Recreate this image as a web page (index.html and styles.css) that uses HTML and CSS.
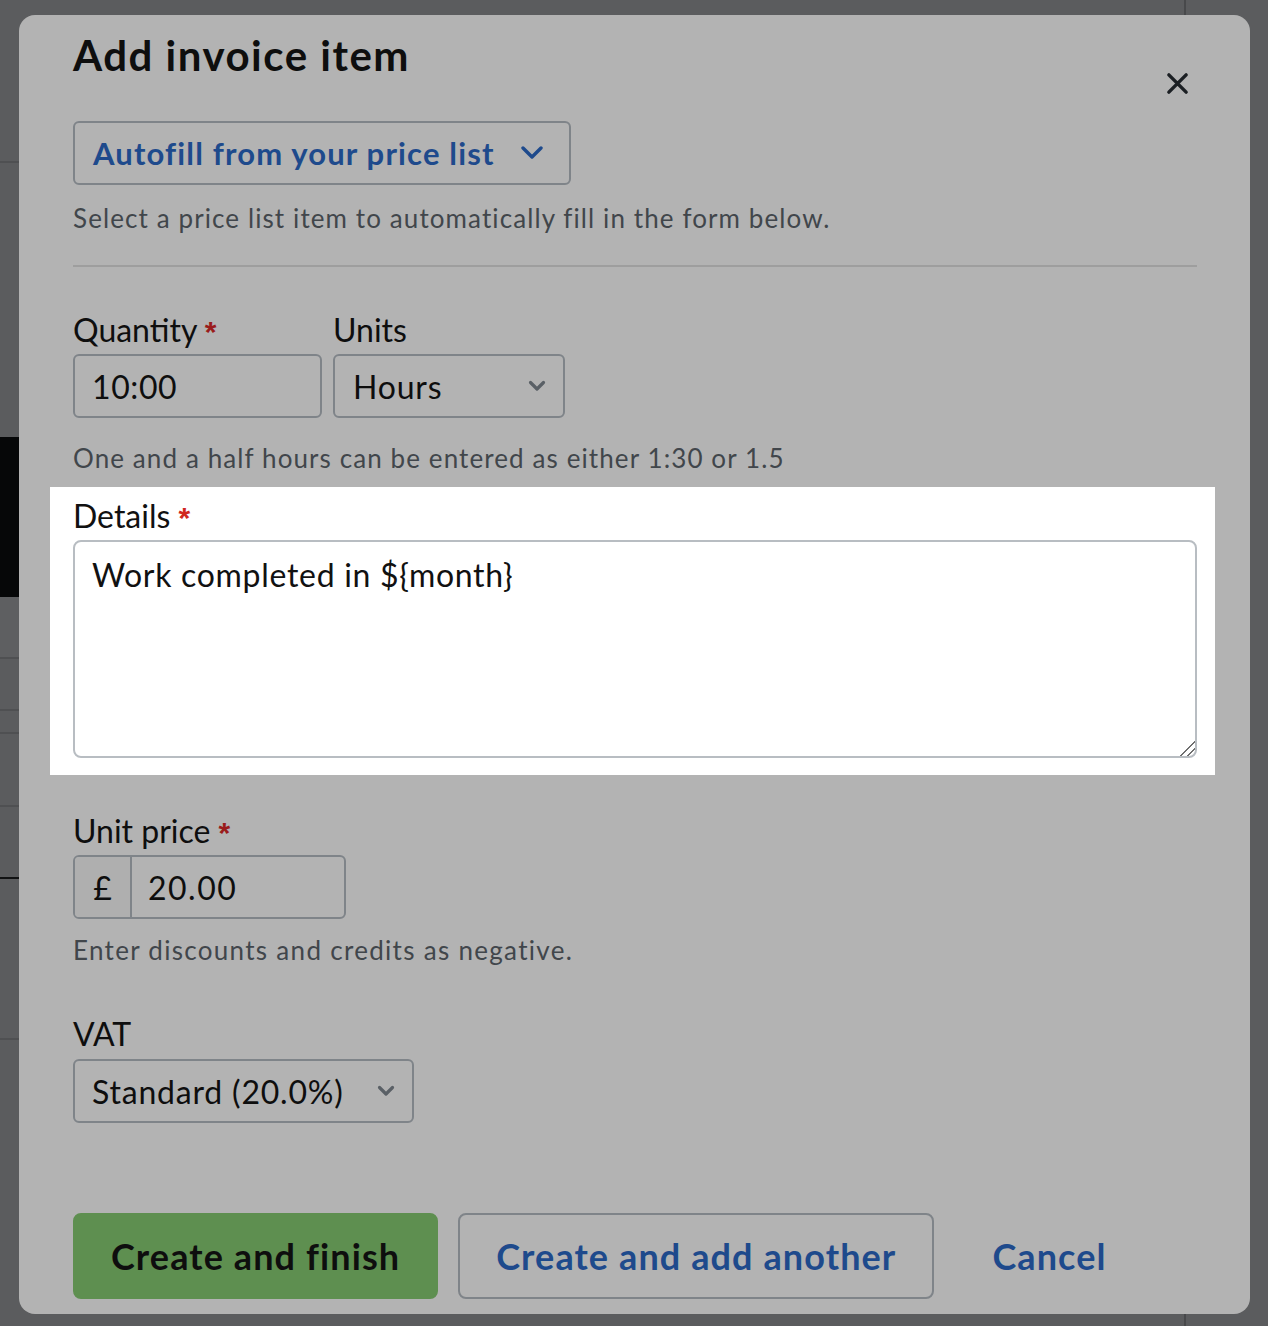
FILE: index.html
```
<!DOCTYPE html>
<html lang="en">

<head>
    <meta charset="utf-8">
    <meta name="viewport" content="width=device-width, initial-scale=1.0">
    <title>Add invoice item</title>
    <link rel="stylesheet" href="styles.css">
</head>

<body>
    <!-- page behind the dialog -->
    <div class="page">
        <div class="side">
            <div class="strip strip-top"></div>
            <div class="strip strip-tall"></div>
            <div class="strip strip-dark"></div>
            <div class="strip strip-light"></div>
            <div class="strip strip-52"></div>
            <div class="strip strip-23"></div>
            <div class="strip strip-72"></div>
            <div class="strip strip-71"></div>
            <div class="strip strip-160"></div>
        </div>
    </div>

    <div class="modal">
        <div class="modal-head">
            <h1>Add invoice item</h1>
            <button class="close" aria-label="Close">
                <svg width="24" height="24" viewBox="0 0 24 24">
                    <path d="M3 3 L21 21 M21 3 L3 21" stroke="#1b1f23" stroke-width="3.6" stroke-linecap="round" fill="none" />
                </svg>
            </button>
        </div>

        <button class="autofill">
            Autofill from your price list
            <svg width="22" height="14" viewBox="0 0 22 14">
                <path d="M2 2 L11 11 L20 2" stroke="#1e4a8c" stroke-width="3.4" stroke-linecap="round" stroke-linejoin="round" fill="none" />
            </svg>
        </button>
        <p class="help">Select a price list item to automatically fill in the form below.</p>

        <hr>

        <div class="row">
            <div class="field">
                <label class="label">Quantity <span class="req">*</span></label>
                <input class="input qty" type="text" value="10:00">
            </div>
            <div class="field">
                <label class="label">Units</label>
                <div class="select-box units">
                    <select>
                        <option>Hours</option>
                    </select>
                    <svg width="18" height="12" viewBox="0 0 18 12">
                        <path d="M2.5 2.5 L9 9 L15.5 2.5" stroke="#5a6066" stroke-width="3.2" stroke-linecap="round" stroke-linejoin="round" fill="none" />
                    </svg>
                </div>
            </div>
        </div>
        <p class="help help-qty">One and a half hours can be entered as either 1:30 or 1.5</p>

        <div class="spotlight">
            <label class="label">Details <span class="req">*</span></label>
            <textarea>Work completed in ${month}</textarea>
        </div>

        <div class="field price-field">
            <label class="label">Unit price <span class="req">*</span></label>
            <div class="price">
                <span class="currency">£</span>
                <input type="text" value="20.00">
            </div>
        </div>
        <p class="help help-price">Enter discounts and credits as negative.</p>

        <div class="field vat-field">
            <label class="label">VAT</label>
            <div class="select-box vat">
                <select>
                    <option>Standard (20.0%)</option>
                </select>
                <svg width="18" height="12" viewBox="0 0 18 12">
                    <path d="M2.5 2.5 L9 9 L15.5 2.5" stroke="#5a6066" stroke-width="3.2" stroke-linecap="round" stroke-linejoin="round" fill="none" />
                </svg>
            </div>
        </div>

        <div class="actions">
            <button class="btn btn-primary">Create and finish</button>
            <button class="btn btn-secondary">Create and add another</button>
            <button class="btn btn-link">Cancel</button>
        </div>
    </div>
</body>

</html>
```

FILE: styles.css
```
body {
    margin: 0;
    height: 1326px;
    overflow: hidden;
    background-color: #5b5c5e;
    font-family: 'Lato', 'Liberation Sans', sans-serif;
}

/* page behind */
.page {
    display: flex;
    height: 100%;
}

.side {
    width: 1184px;
    border-right: 2px solid #48494b;
    display: flex;
    flex-direction: column;
}

.strip {
    border-bottom: 2px solid #4f5052;
}

.strip-top {
    height: 161px;
}

.strip-tall {
    height: 274px;
    border-bottom: none;
}

.strip-dark {
    height: 160px;
    background-color: #060708;
    border-bottom: none;
}

.strip-light {
    height: 60px;
    background-color: #5e5f61;
}

.strip-52 {
    height: 50px;
}

.strip-23 {
    height: 21px;
}

.strip-72 {
    height: 71px;
}

.strip-71 {
    height: 70px;
    border-bottom-color: #111213;
}

.strip-160 {
    height: 159px;
}

/* dialog */
.modal {
    position: fixed;
    left: 19px;
    top: 15px;
    width: 1231px;
    height: 1299px;
    box-sizing: border-box;
    padding: 14px 53px 15px 54px;
    border-radius: 16px;
    background-color: #b3b3b3;
    display: flex;
    flex-direction: column;
    color: #0e0e0e;
}

.modal > * {
    flex-shrink: 0;
}

.modal-head {
    display: flex;
    justify-content: space-between;
    align-items: flex-start;
    height: 74px;
}

h1 {
    margin: 0;
    font-size: 42px;
    line-height: 52px;
    font-weight: 700;
    letter-spacing: 1.5px;
}

.close {
    width: 40px;
    height: 40px;
    margin-top: 34px;
    padding: 0;
    border: none;
    background: transparent;
    display: flex;
    align-items: center;
    justify-content: center;
}

.close svg {
    width: 23px;
    height: 23px;
}

.autofill {
    margin-top: 18px;
    align-self: flex-start;
    height: 64px;
    box-sizing: border-box;
    padding: 0 26px 0 18px;
    border: 2px solid #7f8489;
    border-radius: 6px;
    background: transparent;
    display: inline-flex;
    align-items: center;
    gap: 26px;
    font-family: inherit;
    font-size: 31px;
    font-weight: 700;
    letter-spacing: 1.15px;
    color: #1e4a8c;
}

.help {
    margin: 15px 0 0;
    font-size: 26px;
    line-height: 36px;
    letter-spacing: 1.1px;
    color: #41464b;
}

hr {
    margin: 29px 0 0;
    border: none;
    height: 2px;
    background-color: #9e9e9e;
}

.row {
    margin-top: 43px;
    display: flex;
    gap: 11px;
}

.field {
    display: flex;
    flex-direction: column;
}

.label {
    display: block;
    height: 40px;
    font-size: 32px;
    line-height: 40px;
    margin-bottom: 4px;
}

.req {
    color: #9a1c1c;
    font-family: 'Liberation Sans', sans-serif;
    font-weight: 700;
    font-size: 30px;
    line-height: 0;
}

.input {
    height: 64px;
    box-sizing: border-box;
    border: 2px solid #7f8489;
    border-radius: 6px;
    padding: 0 17px;
    background: transparent;
    font-family: inherit;
    font-size: 32px;
    letter-spacing: 0.6px;
    color: #0e0e0e;
}

.qty {
    width: 249px;
}

.select-box {
    height: 64px;
    box-sizing: border-box;
    border: 2px solid #7f8489;
    border-radius: 6px;
    display: flex;
    align-items: center;
    padding: 0 17px 0 18px;
}

.select-box select {
    flex: 1;
    appearance: none;
    -webkit-appearance: none;
    border: none;
    background: transparent;
    padding: 0;
    font-family: inherit;
    font-size: 32px;
    letter-spacing: 0.8px;
    color: #0e0e0e;
    outline: none;
}

.units {
    width: 232px;
}

.vat {
    width: 341px;
    padding-left: 17px;
}

.help-qty {
    margin-top: 22px;
}

.spotlight {
    margin: 11px -18px 0 -23px;
    padding: 9px 18px 17px 23px;
    background-color: #ffffff;
    color: #111111;
}

.spotlight .req {
    color: #d0271f;
}

textarea {
    display: block;
    width: 100%;
    height: 218px;
    box-sizing: border-box;
    padding: 13px 17px;
    border: 2px solid #b8bdc2;
    border-radius: 8px;
    font-family: inherit;
    font-size: 32px;
    line-height: 40px;
    letter-spacing: 0.7px;
    color: #111111;
    resize: vertical;
}

textarea::-webkit-resizer {
    background: linear-gradient(135deg, transparent 48%, #6f6f6f 48%, #6f6f6f 56%, transparent 56%, transparent 72%, #6f6f6f 72%, #6f6f6f 80%, transparent 80%);
}

.price-field {
    margin-top: 36px;
}

.price {
    width: 273px;
    height: 64px;
    box-sizing: border-box;
    border: 2px solid #7f8489;
    border-radius: 6px;
    display: flex;
    overflow: hidden;
}

.currency {
    width: 55px;
    border-right: 2px solid #7f8489;
    background-color: #afafaf;
    display: flex;
    align-items: center;
    justify-content: center;
    font-size: 32px;
}

.price input {
    flex: 1;
    min-width: 0;
    border: none;
    background: transparent;
    padding: 0 16px;
    font-family: inherit;
    font-size: 32px;
    letter-spacing: 1.5px;
    color: #0e0e0e;
}

.help-price {
    margin-top: 13px;
    letter-spacing: 1.3px;
}

.vat-field {
    margin-top: 46px;
}

.vat-field .label {
    margin-bottom: 5px;
}

.actions {
    margin-top: 90px;
    display: flex;
    gap: 20px;
}

.btn {
    height: 86px;
    box-sizing: border-box;
    padding: 0 36px;
    border: 2px solid transparent;
    border-radius: 8px;
    font-family: inherit;
    font-size: 36px;
    font-weight: 700;
    letter-spacing: 1.1px;
    background: transparent;
}

.btn-primary {
    background-color: #5e8f50;
    border-color: #5e8f50;
    color: #0e0e0e;
}

.btn-secondary {
    border-color: #7f8489;
    color: #1e4a8c;
}

.btn-link {
    color: #1e4a8c;
}
```
